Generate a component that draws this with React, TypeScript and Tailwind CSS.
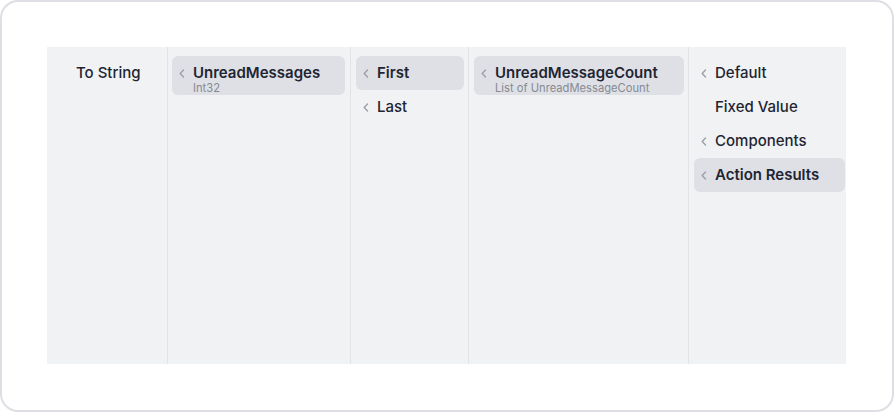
import React from "react";

function Chevron() {
  return (
    <svg width="6" height="9" viewBox="0 0 6 9" className="shrink-0">
      <polyline points="4.5,1 1.2,4.5 4.5,8" fill="none" stroke="#9aa0aa" strokeWidth="1.4" strokeLinecap="round" strokeLinejoin="round" />
    </svg>
  );
}

type Item = { label: string; sub?: string; chevron?: boolean; selected?: boolean };

function Row({ item }: { item: Item }) {
  return (
    <div
      className={
        "flex items-start rounded-[6px] pl-[7px] pr-2 " +
        (item.selected ? "bg-[#dfe0e5] " : "") +
        (item.sub ? "pt-[7px] pb-[2px]" : "py-[7px]")
      }
    >
      <div className="w-[14px] h-[20px] flex items-center shrink-0">{item.chevron ? <Chevron /> : null}</div>
      <div className="flex flex-col min-w-0">
        <span
          className={
            "text-[15px] leading-[20px] text-[#1e2533] whitespace-nowrap " +
            (item.selected ? "font-semibold" : "font-medium")
          }
        >
          {item.label}
        </span>
        {item.sub ? (
          <span className="text-[11.2px] leading-[10px] text-[#858a93] whitespace-nowrap">{item.sub}</span>
        ) : null}
      </div>
    </div>
  );
}

function Column({ width, items, last, pl }: { width: string; items: Item[]; last?: boolean; pl?: string }) {
  return (
    <div className={width + " shrink-0 flex flex-col pt-[9px] " + (pl ?? "pl-[4px] pr-[5px] ") + (last ? "" : " border-r border-[#e1e3e7]")}>
      {items.map((it, i) => (
        <Row key={i} item={it} />
      ))}
    </div>
  );
}

export default function App() {
  return (
    <div
      className="w-[894px] h-[412px] bg-white rounded-[18px] border-2 border-[#dedfe4] flex"
      style={{ fontFamily: "Inter, 'Noto Sans', sans-serif" }}
    >
      <div className="ml-[45px] mt-[45px] w-[799px] h-[317px] bg-[#f1f2f4] flex overflow-hidden">
        <Column width="w-[121px]" pl="pl-[8px] pr-[4px]" items={[{ label: "To String" }]} />
        <Column width="w-[183px]" items={[{ label: "UnreadMessages", sub: "Int32", chevron: true, selected: true }]} />
        <Column
          width="w-[118px]"
          pl="pl-[5px] pr-[4px]"
          items={[
            { label: "First", chevron: true, selected: true },
            { label: "Last", chevron: true },
          ]}
        />
        <Column
          width="w-[220px]"
          pl="pl-[5px] pr-[4px]"
          items={[{ label: "UnreadMessageCount", sub: "List of UnreadMessageCount", chevron: true, selected: true }]}
        />
        <Column
          width="w-[157px]"
          last
          pl="pl-[5px] pr-[1px]"
          items={[
            { label: "Default", chevron: true },
            { label: "Fixed Value" },
            { label: "Components", chevron: true },
            { label: "Action Results", chevron: true, selected: true },
          ]}
        />
      </div>
    </div>
  );
}
